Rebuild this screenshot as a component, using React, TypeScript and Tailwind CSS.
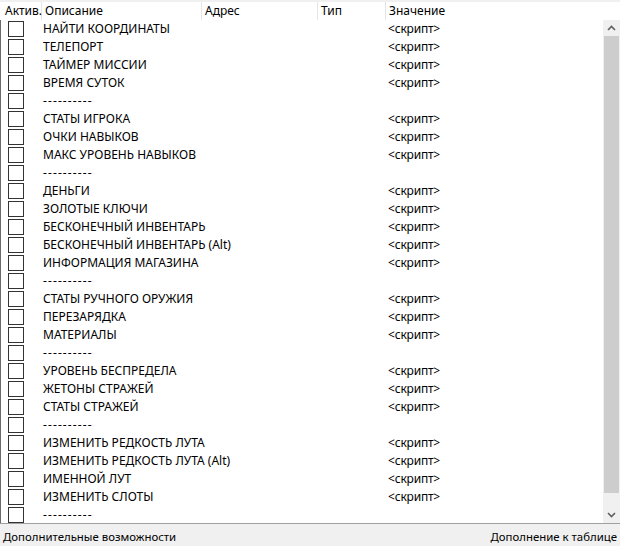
import React from "react";

const rows: string[] = [
  "НАЙТИ КООРДИНАТЫ",
  "ТЕЛЕПОРТ",
  "ТАЙМЕР МИССИИ",
  "ВРЕМЯ СУТОК",
  "",
  "СТАТЫ ИГРОКА",
  "ОЧКИ НАВЫКОВ",
  "МАКС УРОВЕНЬ НАВЫКОВ",
  "",
  "ДЕНЬГИ",
  "ЗОЛОТЫЕ КЛЮЧИ",
  "БЕСКОНЕЧНЫЙ ИНВЕНТАРЬ",
  "БЕСКОНЕЧНЫЙ ИНВЕНТАРЬ (Alt)",
  "ИНФОРМАЦИЯ МАГАЗИНА",
  "",
  "СТАТЫ РУЧНОГО ОРУЖИЯ",
  "ПЕРЕЗАРЯДКА",
  "МАТЕРИАЛЫ",
  "",
  "УРОВЕНЬ БЕСПРЕДЕЛА",
  "ЖЕТОНЫ СТРАЖЕЙ",
  "СТАТЫ СТРАЖЕЙ",
  "",
  "ИЗМЕНИТЬ РЕДКОСТЬ ЛУТА",
  "ИЗМЕНИТЬ РЕДКОСТЬ ЛУТА (Alt)",
  "ИМЕННОЙ ЛУТ",
  "ИЗМЕНИТЬ СЛОТЫ",
  "",
];

function Chevron({ up }: { up?: boolean }) {
  return (
    <svg width="9" height="6" viewBox="0 0 9 6" className={up ? "" : "rotate-180"}>
      <path d="M1 5 L4.5 1.5 L8 5" fill="none" stroke="#606060" strokeWidth="1.6" />
    </svg>
  );
}

export default function App() {
  return (
    <div
      className="flex h-[546px] w-[620px] flex-col bg-white text-[12px] text-black"
      style={{ fontFamily: '"Noto Sans", "Open Sans", sans-serif' }}
    >
      {/* header */}
      <div className="flex h-[20px] shrink-0 border-t-2 border-[#f0f0f0] leading-[18px]">
        <div className="w-[42px] border-r border-[#e5e5e5] pl-[5px]">Актив.</div>
        <div className="w-[160px] border-r border-[#e5e5e5] pl-[3px]">Описание</div>
        <div className="w-[116px] border-r border-[#e5e5e5] pl-[3px]">Адрес</div>
        <div className="w-[68px] border-r border-[#e5e5e5] pl-[3px]">Тип</div>
        <div className="flex-1 pl-[3px]">Значение</div>
      </div>

      <div className="flex min-h-0 flex-1 border-l border-[#6a6a6a]">
        {/* rows */}
        <div className="flex-1 overflow-hidden">
          {rows.map((r, i) => (
            <div key={i} className="flex h-[18px] items-center leading-[18px]">
              <div className="flex w-[41px] items-center pl-[7px]">
                <div className="h-[16px] w-[16px] border border-[#333333] bg-white" />
              </div>
              <div className="w-[345px] whitespace-nowrap pl-[1px]">
                {r || <span className="tracking-[1.1px]">----------</span>}
              </div>
              <div className="pl-[1px] tracking-[-0.2px]">{r ? "<скрипт>" : ""}</div>
            </div>
          ))}
        </div>

        {/* scrollbar */}
        <div className="flex h-[503px] w-[17px] shrink-0 flex-col bg-[#f0f0f0]">
          <div className="flex h-[16px] items-center justify-center">
            <Chevron up />
          </div>
          <div className="mx-[1px] h-[457px] bg-[#cdcdcd]" />
          <div className="flex-1" />
          <div className="flex h-[16px] items-center justify-center">
            <Chevron />
          </div>
        </div>
      </div>

      {/* status bar */}
      <div className="flex h-[23px] shrink-0 items-center justify-between border-t border-[#a0a0a0] bg-[#f0f0f0] px-[3px] pt-[3px] text-[11.4px] leading-[20px]">
        <span>Дополнительные возможности</span>
        <span>Дополнение к таблице</span>
      </div>
    </div>
  );
}
